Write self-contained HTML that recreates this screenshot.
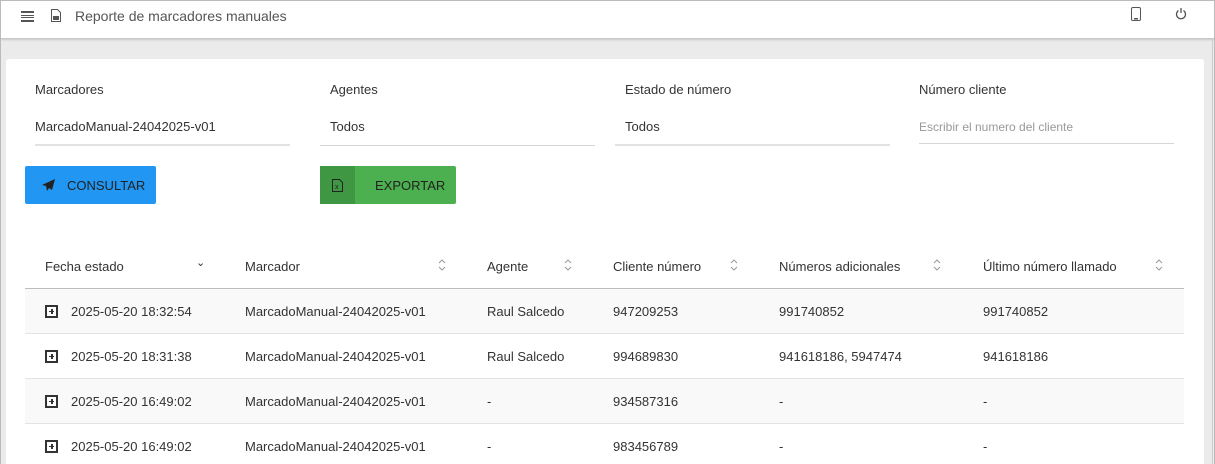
<!DOCTYPE html><html><head><style>
*{margin:0;padding:0;box-sizing:border-box}
html{width:1215px;height:464px;overflow:hidden}
body{width:1215px;height:464px;overflow:hidden;background:#ebebeb;font-family:"Liberation Sans",sans-serif;color:#333;position:relative;font-size:13px}
.frame{position:absolute;left:0;top:0;width:1215px;height:464px;border:1px solid #bbb;border-bottom:none;pointer-events:none}
.hdr{position:absolute;left:0;top:0;width:1215px;height:39px;background:#fff;border-bottom:1px solid #c8c8c8;box-shadow:0 1px 2px rgba(0,0,0,.15)}
.t{position:absolute;white-space:nowrap}
.card{position:absolute;left:6px;top:59px;width:1198px;height:405px;background:#fff;border-radius:3px 3px 0 0}
.lbl{font-size:13px;color:#333}
.ul{position:absolute;height:1px;background:#d6d6d6}
.btn{position:absolute;border-radius:2px;font-size:13px;color:#222}
.row{position:absolute;left:25px;width:1159px;height:45px;border-bottom:1px solid #e3e3e3}
.row .t{top:15px}
.plus{position:absolute;left:20px;top:16px;width:13px;height:13px;border:2px solid #333;background:#fff}
.plus:before{content:"";position:absolute;left:2px;top:4px;width:5px;height:1px;border-top:1.5px solid #333}
.plus:after{content:"";position:absolute;left:4px;top:2px;width:1.5px;height:5px;background:#333}
</style></head><body>
<div class="hdr">
<div class="t" style="left:21px;top:11px;width:13px;height:11px;border-top:2px solid #555;border-bottom:2px solid #555"></div>
<div class="t" style="left:21px;top:15px;width:13px;height:3px;border-top:1px solid #555;border-bottom:1px solid #555"></div>
<svg class="t" style="left:51px;top:9px" width="10" height="13" viewBox="0 0 10 13"><path d="M0.5 0.5h6l3 3v9h-9z" fill="none" stroke="#555"/><rect x="2" y="7" width="6" height="4" fill="#555"/></svg>
<div class="t" style="left:75px;top:8px;font-size:14px;color:#555">Reporte de marcadores manuales</div>
<svg class="t" style="left:1131px;top:7px" width="10" height="14"><rect x="0.5" y="0.5" width="9" height="13" rx="1.5" fill="none" stroke="#555"/><rect x="3" y="11" width="4" height="1.5" fill="#555"/></svg>
<svg class="t" style="left:1175px;top:7px" width="12" height="13"><path d="M3.5 3.5A4.5 4.5 0 1 0 8.5 3.5" fill="none" stroke="#555" stroke-width="1.3"/><path d="M6 1v5" stroke="#555" stroke-width="1.3"/></svg>
</div>
<div style="position:absolute;left:1212px;top:40px;width:1px;height:424px;background:#ccc"></div>
<div class="card"></div>
<div class="t lbl" style="left:35px;top:82px">Marcadores</div>
<div class="t lbl" style="left:330px;top:82px">Agentes</div>
<div class="t lbl" style="left:625px;top:82px">Estado de número</div>
<div class="t lbl" style="left:919px;top:82px">Número cliente</div>
<div class="t lbl" style="left:35px;top:119px">MarcadoManual-24042025-v01</div>
<div class="t lbl" style="left:330px;top:119px">Todos</div>
<div class="t lbl" style="left:625px;top:119px">Todos</div>
<div class="t" style="left:919px;top:120px;font-size:12px;color:#999">Escribir el numero del cliente</div>
<div class="ul" style="left:35px;top:144px;width:255px;height:2px;background:#e2e2e2"></div>
<div class="ul" style="left:320px;top:145px;width:275px"></div>
<div class="ul" style="left:615px;top:144px;width:275px;height:2px;background:#e2e2e2"></div>
<div class="ul" style="left:919px;top:143px;width:255px"></div>
<div class="btn" style="left:25px;top:166px;width:131px;height:38px;background:#2196f3">
<svg class="t" style="left:17px;top:13px" width="13" height="12" viewBox="0 0 13 12"><path d="M13 0L0 6l4 1 1 5 2-3 3 2z" fill="#222"/></svg>
<div class="t" style="left:42px;top:12px">CONSULTAR</div></div>
<div class="btn" style="left:320px;top:166px;width:136px;height:38px;background:#4caf50">
<div class="t" style="left:0;top:0;width:35px;height:38px;background:#3f9743"></div>
<svg class="t" style="left:12px;top:13px" width="12" height="13"><path d="M0.5 0.5h7l3 3v9h-10z" fill="none" stroke="#222"/><text x="3" y="10" font-size="7" fill="#222">x</text></svg>
<div class="t" style="left:55px;top:12px">EXPORTAR</div></div>
<div class="t" style="left:45px;top:259px">Fecha estado</div>
<div class="t" style="left:196px;top:256px;font-size:11px">⌄</div>
<div class="t" style="left:245px;top:259px">Marcador</div>
<div class="t" style="left:487px;top:259px">Agente</div>
<div class="t" style="left:613px;top:259px">Cliente número</div>
<div class="t" style="left:779px;top:259px">Números adicionales</div>
<div class="t" style="left:983px;top:259px">Último número llamado</div>
<svg class="t" style="left:438px;top:259px" width="8" height="12"><path d="M1 4l3-3 3 3M1 8l3 3 3-3" fill="none" stroke="#999"/></svg>
<svg class="t" style="left:564px;top:259px" width="8" height="12"><path d="M1 4l3-3 3 3M1 8l3 3 3-3" fill="none" stroke="#999"/></svg>
<svg class="t" style="left:730px;top:259px" width="8" height="12"><path d="M1 4l3-3 3 3M1 8l3 3 3-3" fill="none" stroke="#999"/></svg>
<svg class="t" style="left:933px;top:259px" width="8" height="12"><path d="M1 4l3-3 3 3M1 8l3 3 3-3" fill="none" stroke="#999"/></svg>
<svg class="t" style="left:1155px;top:259px" width="8" height="12"><path d="M1 4l3-3 3 3M1 8l3 3 3-3" fill="none" stroke="#999"/></svg>
<div style="position:absolute;left:25px;top:288px;width:1159px;height:1px;background:#bdbdbd"></div>
<div class="row" style="top:289px;background:#f9f9f9"><div class="plus"></div><div class="t" style="left:46px">2025-05-20 18:32:54</div><div class="t" style="left:220px">MarcadoManual-24042025-v01</div><div class="t" style="left:462px">Raul Salcedo</div><div class="t" style="left:588px">947209253</div><div class="t" style="left:754px">991740852</div><div class="t" style="left:958px">991740852</div></div>
<div class="row" style="top:334px;background:#fff"><div class="plus"></div><div class="t" style="left:46px">2025-05-20 18:31:38</div><div class="t" style="left:220px">MarcadoManual-24042025-v01</div><div class="t" style="left:462px">Raul Salcedo</div><div class="t" style="left:588px">994689830</div><div class="t" style="left:754px">941618186, 5947474</div><div class="t" style="left:958px">941618186</div></div>
<div class="row" style="top:379px;background:#f9f9f9"><div class="plus"></div><div class="t" style="left:46px">2025-05-20 16:49:02</div><div class="t" style="left:220px">MarcadoManual-24042025-v01</div><div class="t" style="left:462px">-</div><div class="t" style="left:588px">934587316</div><div class="t" style="left:754px">-</div><div class="t" style="left:958px">-</div></div>
<div class="row" style="top:424px;height:40px;border-bottom:none;background:#fff"><div class="plus"></div><div class="t" style="left:46px">2025-05-20 16:49:02</div><div class="t" style="left:220px">MarcadoManual-24042025-v01</div><div class="t" style="left:462px">-</div><div class="t" style="left:588px">983456789</div><div class="t" style="left:754px">-</div><div class="t" style="left:958px">-</div></div>
<div class="frame"></div>
</body></html>
